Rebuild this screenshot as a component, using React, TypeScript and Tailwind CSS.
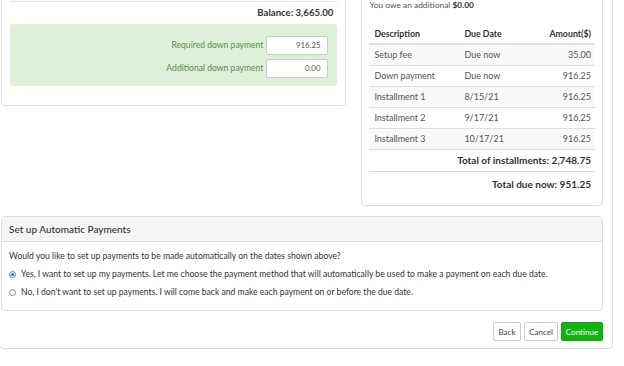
import React from "react";

const font = { fontFamily: 'Lato, "Open Sans", sans-serif' };

function Row({ d, date, amt, striped }: { d: string; date: string; amt: string; striped?: boolean }) {
  return (
    <div className={`flex h-[21px] items-center border-t border-[#ddd] text-[9px] text-[#555] ${striped ? "bg-[#f9f9f9]" : ""}`}>
      <div className="w-[90px] pl-[5px]">{d}</div>
      <div className="w-[70px] pl-[5px]">{date}</div>
      <div className="flex-1 pr-[4px] text-right">{amt}</div>
    </div>
  );
}

export default function App() {
  return (
    <div className="h-[366px] w-[624px] overflow-hidden bg-white text-[#333]" style={font}>
      <div className="-ml-px -mt-[20px] w-[614px] rounded border border-[#ddd] pb-[7px] pl-px pr-[9px]">
        <div className="flex items-start">
          {/* left panel */}
          <div className="w-[346px] rounded border border-[#ddd] px-[8px] pb-[19px] pt-[19px]">
            <div className="border-t border-[#e5e5e5]" />
            <div className="flex h-[22px] items-center justify-end pr-[4px] text-[9.6px] font-bold text-[#333]">
              Balance: 3,665.00
            </div>
            <div className="flex flex-col gap-[4px] rounded-[3px] bg-[#dff0d8] pb-[8px] pr-[9px] pt-[12px]">
              <div className="flex items-center justify-end gap-[3px]">
                <span className="text-[8.6px] text-[#5b8a4f]">Required down payment</span>
                <div className="flex h-[19px] w-[62px] items-center justify-end rounded-[2px] border border-[#ccc] bg-white pr-[7px] text-[7.8px] text-[#555]">
                  916.25
                </div>
              </div>
              <div className="flex items-center justify-end gap-[3px]">
                <span className="text-[8.6px] text-[#5b8a4f]">Additional down payment</span>
                <div className="flex h-[19px] w-[62px] items-center justify-end rounded-[2px] border border-[#ccc] bg-white pr-[7px] text-[7.8px] text-[#555]">
                  0.00
                </div>
              </div>
            </div>
          </div>
          <div className="w-[15px]" />
          {/* right panel */}
          <div className="w-[242px] rounded border border-[#ddd] px-[7px] pb-[8px] pt-[15px]">
            <div className="flex h-[16px] items-center text-[8.4px] text-[#555]">
              You owe an additional&nbsp;<b className="text-[#333]">$0.00</b>
            </div>
            <div className="mt-[11px]">
              <div className="flex h-[20px] items-center border-b border-[#ddd] text-[8.8px] font-bold text-[#333]">
                <div className="w-[90px] pl-[5px]">Description</div>
                <div className="w-[70px] pl-[5px]">Due Date</div>
                <div className="flex-1 pr-[4px] text-right">Amount($)</div>
              </div>
              <Row d="Setup fee" date="Due now" amt="35.00" striped />
              <Row d="Down payment" date="Due now" amt="916.25" />
              <Row d="Installment 1" date="8/15/21" amt="916.25" striped />
              <Row d="Installment 2" date="9/17/21" amt="916.25" />
              <Row d="Installment 3" date="10/17/21" amt="916.25" striped />
              <div className="flex h-[22px] items-center justify-end border-t border-[#ddd] pr-[4px] text-[10px] font-bold">
                Total of installments: 2,748.75
              </div>
              <div className="flex h-[26px] items-center justify-end border-t border-[#ddd] pr-[4px] text-[10px] font-bold">
                Total due now: 951.25
              </div>
            </div>
          </div>
        </div>
        {/* auto payments */}
        <div className="mt-[10px] rounded border border-[#ddd]">
          <div className="flex h-[25px] items-center border-b border-[#ddd] bg-[#f5f5f5] px-[7px] text-[10px] font-medium text-[#333]">
            Set up Automatic Payments
          </div>
          <div className="px-[7px] pb-[9px] pt-[5px] text-[8.6px] text-[#333]">
            <div className="flex h-[18px] items-center">
              Would you like to set up payments to be made automatically on the dates shown above?
            </div>
            <div className="flex h-[18px] items-center gap-[4px]">
              <span className="flex h-[7px] w-[7px] items-center justify-center rounded-full border border-[#3b82f6] bg-white">
                <span className="h-[3px] w-[3px] rounded-full bg-[#1a73e8]" />
              </span>
              <span className="pl-px">
                Yes, I want to set up my payments. Let me choose the payment method that will automatically be used to make a payment on each due date.
              </span>
            </div>
            <div className="flex h-[18px] items-center gap-[4px]">
              <span className="h-[7px] w-[7px] rounded-full border border-[#888] bg-white" />
              <span className="pl-px">
                No, I don't want to set up payments. I will come back and make each payment on or before the due date.
              </span>
            </div>
          </div>
        </div>
        <div className="mt-[11px] flex justify-end gap-[3px]">
          <button className="h-[19px] w-[28px] rounded-[2px] border border-[#ccc] bg-white text-[8px] text-[#444]">Back</button>
          <button className="h-[19px] w-[34px] rounded-[2px] border border-[#ccc] bg-white text-[8px] text-[#444]">Cancel</button>
          <button className="h-[19px] w-[42px] rounded-[2px] border border-[#0ea50e] bg-[#12b312] text-[8px] text-white">Continue</button>
        </div>
      </div>
    </div>
  );
}
